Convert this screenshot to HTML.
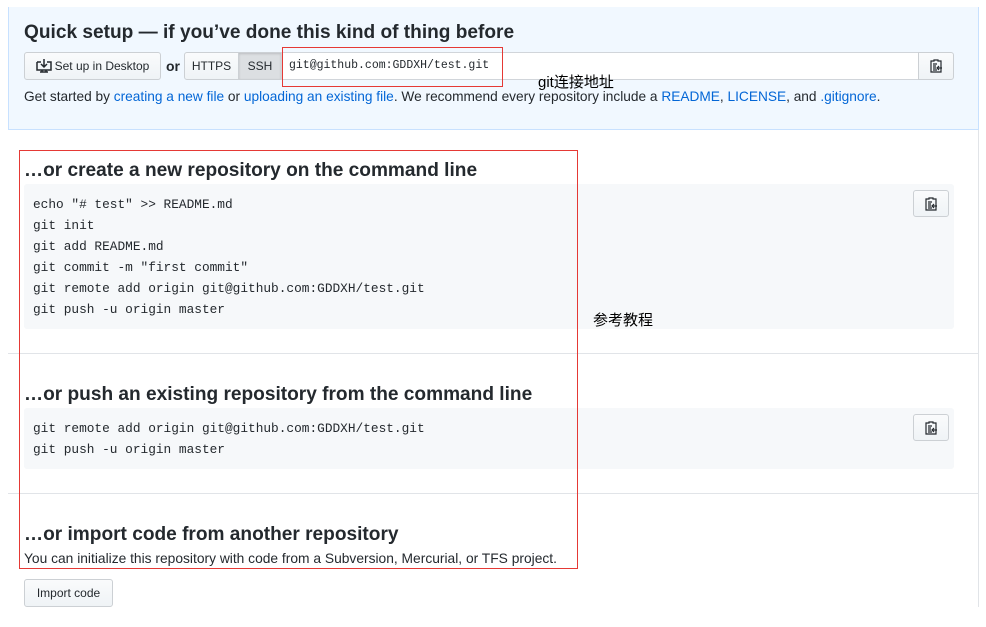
<!DOCTYPE html>
<html><head><meta charset="utf-8"><style>
*{box-sizing:border-box;margin:0;padding:0}
body{width:986px;height:627px;background:#fff;font-family:"Liberation Sans","Noto Sans CJK SC",sans-serif;color:#24292e;position:relative;overflow:hidden}
.abs{position:absolute}
.panel{left:8px;top:7px;width:971px;height:123px;background:#f1f8ff;border:1px solid #c8e1ff;border-top:none}
h3{font-weight:bold;font-size:19.1px;position:absolute;left:24px;color:#24292e;white-space:nowrap}
.btn{position:absolute;background:linear-gradient(#fafbfc,#eff3f6);border:1px solid #ccd0d4;border-radius:3px;font-size:12px;color:#24292e;display:flex;align-items:center;justify-content:center}
.mono{font-family:"Liberation Mono",monospace}
.code{position:absolute;left:24px;width:930px;background:#f6f8fa;border-radius:3px;font-family:"Liberation Mono",monospace;font-size:12.8px;line-height:21px;padding:10px 9px;color:#24292e}
a{color:#0366d6;text-decoration:none}
.hr{position:absolute;left:8px;width:971px;height:1px;background:#e1e4e8}
.red{position:absolute;border:1px solid #e53935}
</style></head><body>
<div class="abs panel"></div>
<div class="abs" style="left:978px;top:130px;width:1px;height:477px;background:#e1e4e8"></div>
<h3 style="top:22px">Quick setup — if you’ve done this kind of thing before</h3>
<div class="btn" style="left:24px;top:52px;width:137px;height:28px"><svg width="16" height="14" viewBox="0 0 16 14" style="margin-right:3px"><path d="M1 3h4M11 3h4v8H1V3M8 0v8M5 5l3 3 3-3M4 13h8M6 11v2M10 11v2" stroke="#24292e" stroke-width="1.5" fill="none"/></svg>Set up in Desktop</div>
<div class="abs" style="left:166px;top:58px;font-size:14px;font-weight:bold">or</div>
<div class="btn" style="left:184px;top:52px;width:55px;height:28px;border-radius:3px 0 0 3px">HTTPS</div>
<div class="btn" style="left:238px;top:52px;width:44px;height:28px;border-radius:0;background:#dcdfe2;box-shadow:inset 0 1px 2px rgba(0,0,0,.15)">SSH</div>
<div class="abs" style="left:281px;top:52px;width:639px;height:28px;background:#fff;border:1px solid #d1d5da"></div>
<div class="abs mono" style="left:289px;top:59px;font-size:11.5px">git@github.com:GDDXH/test.git</div>
<div class="btn" style="left:918px;top:52px;width:36px;height:28px;border-radius:0 3px 3px 0"><svg width="14" height="16" viewBox="0 0 14 16"><path d="M2 3h3V2h4v1h3v11H2zM4 6h4M4 8h3M4 10h3M4 12h4M8 10h5M10 8l-2 2 2 2" stroke="#24292e" stroke-width="1.2" fill="none"/></svg></div>
<div class="red" style="left:282px;top:47px;width:221px;height:40px"></div>
<div class="abs" style="left:538px;top:71px;font-size:15px;color:#000">git连接地址</div>
<div class="abs" style="left:24px;top:89px;font-size:13.7px;white-space:nowrap">Get started by <a>creating a new file</a> or <a>uploading an existing file</a>. We recommend every repository include a <a>README</a>, <a>LICENSE</a>, and <a>.gitignore</a>.</div>

<h3 style="top:160px">…or create a new repository on the command line</h3>
<div class="code" style="top:184px;height:145px">echo "# test" &gt;&gt; README.md<br>git init<br>git add README.md<br>git commit -m "first commit"<br>git remote add origin git@github.com:GDDXH/test.git<br>git push -u origin master</div>
<div class="btn" style="left:913px;top:190px;width:36px;height:27px"><svg width="14" height="16" viewBox="0 0 14 16"><path d="M2 3h3V2h4v1h3v11H2zM4 6h4M4 8h3M4 10h3M4 12h4M8 10h5M10 8l-2 2 2 2" stroke="#24292e" stroke-width="1.2" fill="none"/></svg></div>
<div class="abs" style="left:593px;top:309px;font-size:15px;color:#000">参考教程</div>
<div class="hr" style="top:353px"></div>

<h3 style="top:384px">…or push an existing repository from the command line</h3>
<div class="code" style="top:408px;height:61px">git remote add origin git@github.com:GDDXH/test.git<br>git push -u origin master</div>
<div class="btn" style="left:913px;top:414px;width:36px;height:27px"><svg width="14" height="16" viewBox="0 0 14 16"><path d="M2 3h3V2h4v1h3v11H2zM4 6h4M4 8h3M4 10h3M4 12h4M8 10h5M10 8l-2 2 2 2" stroke="#24292e" stroke-width="1.2" fill="none"/></svg></div>
<div class="hr" style="top:493px"></div>

<h3 style="top:524px">…or import code from another repository</h3>
<div class="abs" style="left:24px;top:551px;font-size:13.8px;white-space:nowrap">You can initialize this repository with code from a Subversion, Mercurial, or TFS project.</div>
<div class="btn" style="left:24px;top:579px;width:89px;height:28px">Import code</div>
<div class="red" style="left:19px;top:150px;width:559px;height:419px"></div>
</body></html>
